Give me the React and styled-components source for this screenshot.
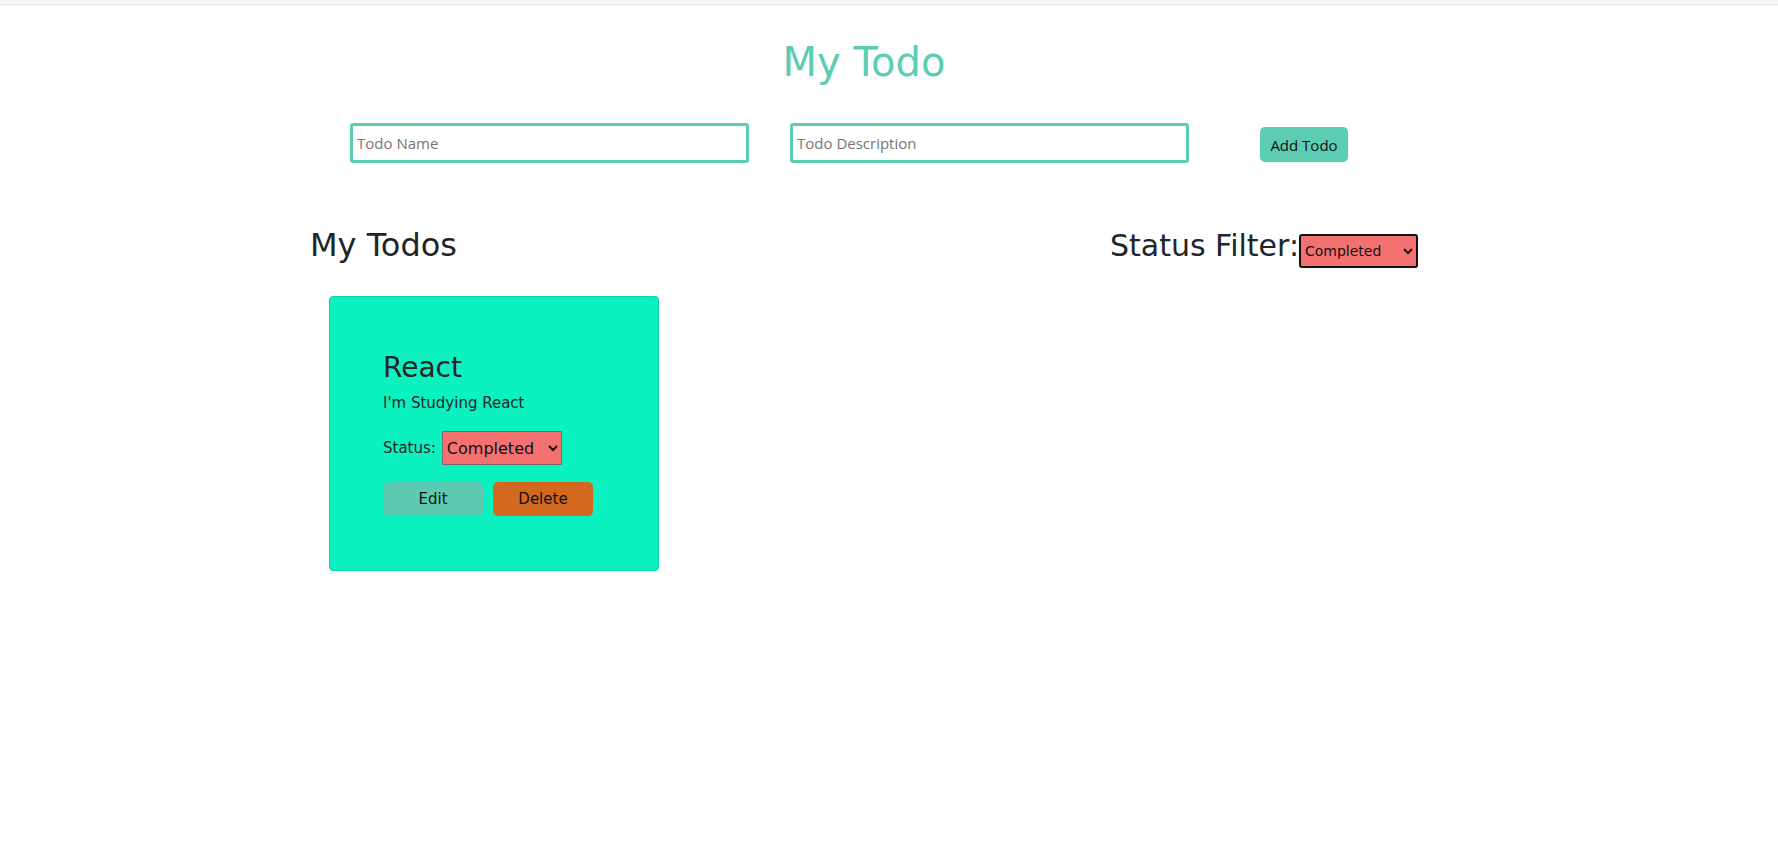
import React, { useState } from 'react';
import styled, { createGlobalStyle } from 'styled-components';

const GlobalStyle = createGlobalStyle`
	body {
		margin: 0;
		background: #fff;
		color: #212529;
		font-family: 'Comic Sans MS', 'DejaVu Sans', sans-serif;
	}
`;

const comic = `'Comic Sans MS', 'DejaVu Sans', sans-serif`;

const App = () => {
	const [filter, setFilter] = useState('completed');
	const [status, setStatus] = useState('completed');
	return (
		<>
			<GlobalStyle />
			<TopBar />
			<Page>
				<Container>
					<Title>My Todo</Title>
					<Form onSubmit={(e) => e.preventDefault()}>
						<Input placeholder='Todo Name' />
						<Input placeholder='Todo Description' $wide />
						<AddButton type='submit'>Add Todo</AddButton>
					</Form>
					<ListHeader>
						<Heading>My Todos</Heading>
						<FilterGroup>
							<FilterLabel>Status Filter:</FilterLabel>
							<FilterSelect
								value={filter}
								onChange={(e) => setFilter(e.target.value)}
							>
								<option value='all'>All</option>
								<option value='completed'>Completed</option>
								<option value='pending'>Not Completed</option>
							</FilterSelect>
						</FilterGroup>
					</ListHeader>
					<Cards>
						<Card>
							<CardTitle>React</CardTitle>
							<CardText>I'm Studying React</CardText>
							<StatusRow>
								Status:
								<StatusSelect
									value={status}
									onChange={(e) => setStatus(e.target.value)}
								>
									<option value='completed'>Completed</option>
									<option value='pending'>Not Completed</option>
								</StatusSelect>
							</StatusRow>
							<Actions>
								<ActionButton $bg='#5ccbb2'>Edit</ActionButton>
								<ActionButton $bg='#d2691e'>Delete</ActionButton>
							</Actions>
						</Card>
					</Cards>
				</Container>
			</Page>
		</>
	);
};

export default App;

const TopBar = styled.div`
	height: 4px;
	background: #f5f5f5;
	border-bottom: 1px solid #e4e4e4;
`;
const Page = styled.div`
	padding-right: 50px;
`;
const Container = styled.div`
	width: 1108px;
	margin: 0 auto;
`;
const Title = styled.h1`
	margin: 33px 0 0;
	text-align: center;
	font-family: ${comic};
	font-weight: 400;
	font-size: 40px;
	line-height: 48px;
	color: #5ccdb2;
`;
const Form = styled.form`
	display: flex;
	align-items: center;
	margin-top: 37px;
	padding-left: 40px;
`;
const Input = styled.input`
	box-sizing: border-box;
	width: 399px;
	height: 40px;
	margin-right: ${(p) => (p.$wide ? '71px' : '41px')};
	padding: 0 4px;
	border: 3px solid #5ccdb2;
	border-radius: 3px;
	outline: none;
	font-family: 'Segoe UI', 'Open Sans', sans-serif;
	font-size: 15px;
	color: #212529;
	&::placeholder {
		color: #757575;
	}
`;
const AddButton = styled.button`
	box-sizing: border-box;
	width: 88px;
	height: 35px;
	margin-top: 3px;
	border: none;
	border-radius: 5px;
	background: #5ccdb2;
	color: #111;
	font-family: 'Segoe UI', 'Open Sans', sans-serif;
	font-size: 15px;
	cursor: pointer;
`;
const ListHeader = styled.div`
	display: flex;
	justify-content: space-between;
	align-items: baseline;
	margin-top: 62px;
`;
const Heading = styled.h2`
	margin: 0;
	font-family: ${comic};
	font-weight: 400;
	font-size: 32px;
	line-height: 40px;
`;
const FilterGroup = styled.div`
	display: flex;
	align-items: baseline;
`;
const FilterLabel = styled.span`
	font-size: 30px;
	line-height: 36px;
`;
const FilterSelect = styled.select`
	box-sizing: border-box;
	width: 119px;
	height: 34px;
	border: 2px solid #111;
	border-radius: 3px;
	background: #f47171;
	color: #111;
	font-family: ${comic};
	font-size: 14px;
`;
const Cards = styled.div`
	display: flex;
	flex-wrap: wrap;
	gap: 20px;
	padding-left: 19px;
	margin-top: 28px;
`;
const Card = styled.div`
	box-sizing: border-box;
	width: 330px;
	min-height: 274px;
	padding: 54px 53px;
	background: #0cf1c0;
	border: 1px solid #0bd6aa;
	border-radius: 4px;
`;
const CardTitle = styled.h3`
	margin: 0;
	font-weight: 400;
	font-size: 28px;
	line-height: 34px;
`;
const CardText = styled.p`
	margin: 6px 0 0;
	font-size: 15px;
	line-height: 24px;
`;
const StatusRow = styled.div`
	display: flex;
	align-items: center;
	gap: 6px;
	margin-top: 16px;
	font-size: 15px;
`;
const StatusSelect = styled.select`
	box-sizing: border-box;
	width: 120px;
	height: 34px;
	border: 1px solid #7a6a6a;
	border-radius: 0;
	background: #f47171;
	color: #111;
	font-family: ${comic};
	font-size: 16px;
`;
const Actions = styled.div`
	display: flex;
	gap: 10px;
	margin-top: 17px;
`;
const ActionButton = styled.button`
	width: 100px;
	height: 34px;
	border: none;
	border-radius: 5px;
	background: ${(p) => p.$bg};
	color: #111;
	font-family: ${comic};
	font-size: 15px;
	cursor: pointer;
`;
